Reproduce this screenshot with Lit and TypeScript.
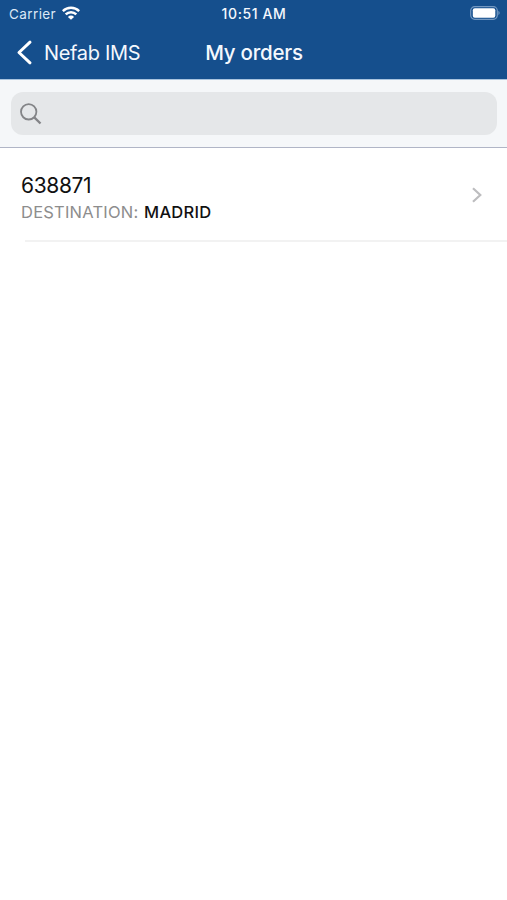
import { LitElement, html, css } from "lit";
import { customElement } from "lit/decorators.js";

@customElement("app-root")
export class AppRoot extends LitElement {
  static styles = css`
    :host { display: block; height: 900px; background: #fff; overflow: hidden; font-family: Inter, "Liberation Sans", sans-serif; color: #111; }
    * { box-sizing: border-box; }
    svg { display: block; }
    .header { height: 79px; background: #154f8d; color: #f4f8fd; }
    .status, .nav { display: grid; grid-template-columns: 1fr auto 1fr; align-items: center; white-space: nowrap; }
    .status { height: 27px; padding: 0 7px 0 9px; font-size: 13.5px; }
    .carrier { display: flex; align-items: center; gap: 6px; color: #dce8f5; letter-spacing: .4px; }
    .carrier svg { margin-top: -2px; }
    .time { font-size: 14px; font-weight: 550; letter-spacing: .6px; margin-right: 1px; }
    .battery { justify-self: end; margin-top: -1px; }
    .nav { height: 50px; padding: 1px 16px 0; font-size: 20px; }
    .back { display: flex; align-items: center; gap: 11px; letter-spacing: -.32px; }
    .back svg { margin-top: -1px; }
    .title { font-size: 20.5px; font-weight: 550; letter-spacing: -.25px; margin-left: 1px; }
    .search { height: 69px; padding: 12px 10px 13px 11px; background: #f5f7f9; border-top: 1px solid #a9c4df; border-bottom: 1px solid #b0b5c6; }
    .field { height: 43px; border-radius: 12px; background: #e5e7e9; padding: 11px 9px; }
    .row { height: 92px; display: flex; align-items: center; justify-content: space-between; padding: 2px 24px 0 21px; }
    .text { padding-top: 5px; }
    .number { font-size: 21px; line-height: 28px; letter-spacing: -.35px; padding-top: 1px; }
    .destination { font-size: 16.5px; line-height: 25px; color: #8d8d8d; white-space: pre; }
    .label { letter-spacing: .22px; }
    .city { font-weight: 550; color: #111; letter-spacing: .25px; margin-left: 1px; }
    .divider { height: 2px; margin-left: 25px; background: #f2f2f2; }
  `;

  render() {
    return html`
      <header class="header">
        <div class="status">
          <div class="carrier"><span>Carrier</span>
            <svg width="18" height="14" viewBox="0 0 18 14" fill="none" stroke="#fff" stroke-width="2.5">
              <path d="M.8 5.1a11.7 11.7 0 0 1 16.4 0M3.7 8.4a7.5 7.5 0 0 1 10.6 0"/>
              <path d="M9 13.8 5.9 10.9a4.4 4.4 0 0 1 6.2 0Z" fill="#fff" stroke="none"/>
            </svg>
          </div>
          <span class="time">10:51 AM</span>
          <svg class="battery" width="30" height="14" viewBox="0 0 30 14">
            <rect x=".7" y=".7" width="26.6" height="12.6" rx="4" fill="none" stroke="#7398c1" stroke-width="1.2"/>
            <rect x="2.8" y="2.3" width="22.5" height="9.4" rx="2" fill="#fff"/>
            <path d="M28.4 4.8q2.6 2.2 0 4.4Z" fill="#7398c1"/>
          </svg>
        </div>
        <nav class="nav">
          <div class="back">
            <svg width="17" height="25" viewBox="0 0 17 25" fill="none" stroke="#fff" stroke-width="3" stroke-linecap="round" stroke-linejoin="round"><path d="M14 2.2 3 12.5 14 22.8"/></svg>
            <span>Nefab IMS</span>
          </div>
          <span class="title">My orders</span><span></span>
        </nav>
      </header>
      <div class="search"><div class="field">
        <svg width="22" height="22" viewBox="0 0 22 22" fill="none" stroke="#838487" stroke-width="1.8"><circle cx="8.7" cy="8.8" r="7.7"/><path d="m14.3 14.4 6.2 6.1" stroke-width="2.3"/></svg>
      </div></div>
      <div class="row">
        <div class="text"><div class="number">638871</div><div class="destination"><span class="label">DESTINATION:</span> <span class="city">MADRID</span></div></div>
        <svg width="12" height="16" viewBox="0 0 12 16" fill="none" stroke="#bdbdbf" stroke-width="2.2"><path d="m2 1.2 7.3 6.8L2 14.8"/></svg>
      </div>
      <div class="divider"></div>
    `;
  }
}
